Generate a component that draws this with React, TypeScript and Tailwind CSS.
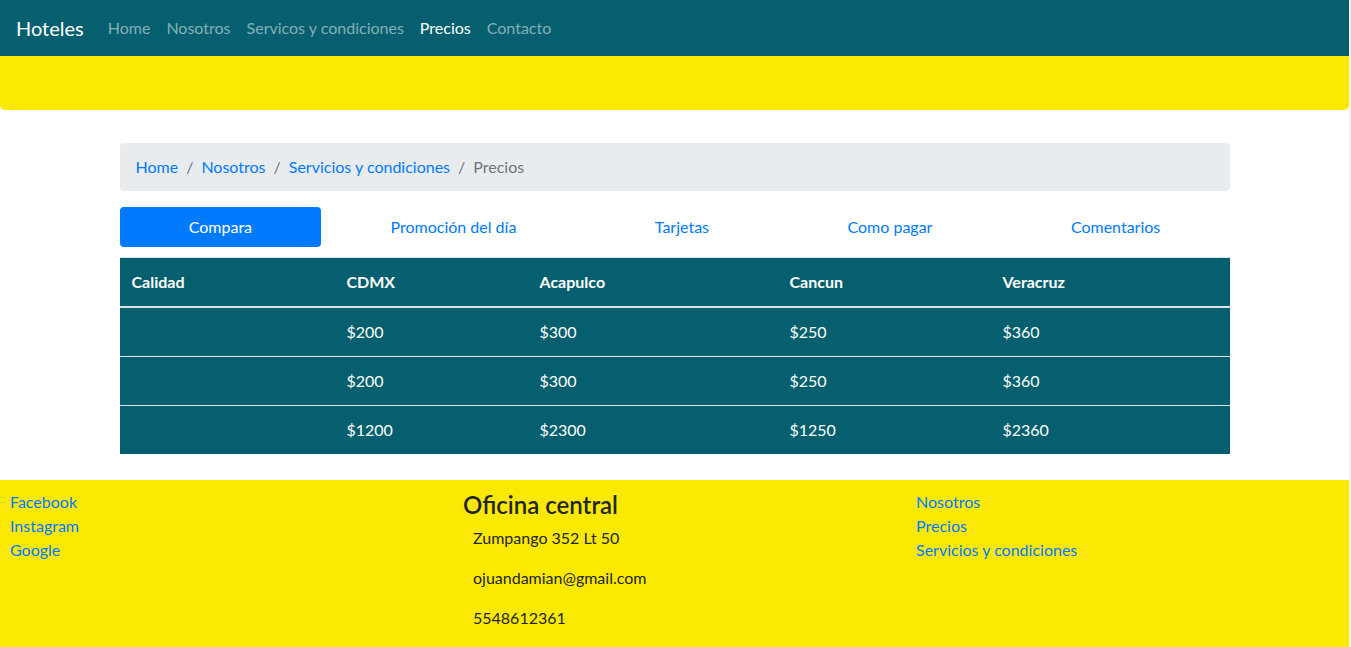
import React from "react";

const font = { fontFamily: "Lato, 'Noto Sans', sans-serif" };

export default function App() {
  const rows = [
    ["", "$200", "$300", "$250", "$360"],
    ["", "$200", "$300", "$250", "$360"],
    ["", "$1200", "$2300", "$1250", "$2360"],
  ];
  const widths = ["w-[215px]", "w-[193px]", "w-[250px]", "w-[213px]", "w-[239px]"];
  const heads = ["Calidad", "CDMX", "Acapulco", "Cancun", "Veracruz"];
  const tabs = ["Compara", "Promoción del día", "Tarjetas", "Como pagar", "Comentarios"];
  return (
    <div className="flex bg-[#f1f1f1] text-[16px] leading-[24px]" style={font}>
      <div className="w-[1349px] bg-white text-[#212529]">
        {/* Navbar */}
        <nav className="h-[56px] bg-[#055f6e] flex items-center px-[16px]">
          <span className="text-white text-[20px] leading-[30px] mr-[16px]">Hoteles</span>
          <div className="flex">
            {["Home", "Nosotros", "Servicos y condiciones", "Precios", "Contacto"].map((l) => (
              <a key={l} className={`px-[8px] ${l === "Precios" ? "text-white" : "text-white/50"}`}>
                {l}
              </a>
            ))}
          </div>
        </nav>
        {/* Jumbotron */}
        <div className="h-[54px] bg-[#fce903] rounded-b-[5px]" />
        {/* Container */}
        <div className="w-[1110px] mx-auto pt-[33px]">
          <ol className="flex bg-[#e9ecef] rounded-[4px] px-[16px] py-[12px] mb-[16px]">
            {["Home", "Nosotros", "Servicios y condiciones"].map((b) => (
              <li key={b} className="flex">
                <a className="text-[#007bff]">{b}</a>
                <span className="px-[8px] text-[#6c757d]">/</span>
              </li>
            ))}
            <li className="text-[#6c757d]">Precios</li>
          </ol>
          <div className="flex mb-[10px]">
            {tabs.map((t, i) => (
              <a
                key={t}
                className={`flex-auto text-center px-[16px] py-[8px] rounded-[4px] ${
                  i === 0 ? "bg-[#007bff] text-white" : "text-[#007bff]"
                }`}
              >
                {t}
              </a>
            ))}
          </div>
          <table className="w-full bg-[#055f6e] text-white border-collapse">
            <thead>
              <tr className="border-t border-[#dee2e6]">
                {heads.map((h, i) => (
                  <th key={h} className={`${widths[i]} text-left font-bold p-[12px] border-b-2 border-[#dee2e6]`}>
                    {h}
                  </th>
                ))}
              </tr>
            </thead>
            <tbody>
              {rows.map((r, ri) => (
                <tr key={ri} className={ri > 0 ? "border-t border-[#dee2e6]" : ""}>
                  {r.map((c, ci) => (
                    <td key={ci} className="p-[12px] h-[48px]">
                      {c}
                    </td>
                  ))}
                </tr>
              ))}
            </tbody>
          </table>
        </div>
        {/* Footer */}
        <footer className="mt-[26px] h-[167px] bg-[#fce903] flex pt-[10px]">
          <div className="w-[453px] pl-[10px] flex flex-col">
            <a className="text-[#007bff]">Facebook</a>
            <a className="text-[#007bff]">Instagram</a>
            <a className="text-[#007bff]">Google</a>
          </div>
          <div className="w-[453px] pl-[10px]">
            <h4 className="text-[24px] leading-[29px] font-semibold mb-[7px]">Oficina central</h4>
            <div className="pl-[10px]">
              <p className="mb-[16px]">Zumpango 352 Lt 50</p>
              <p className="mb-[16px]">ojuandamian@gmail.com</p>
              <p>5548612361</p>
            </div>
          </div>
          <div className="flex-1 pl-[10px] flex flex-col">
            <a className="text-[#007bff]">Nosotros</a>
            <a className="text-[#007bff]">Precios</a>
            <a className="text-[#007bff]">Servicios y condiciones</a>
          </div>
        </footer>
      </div>
    </div>
  );
}
